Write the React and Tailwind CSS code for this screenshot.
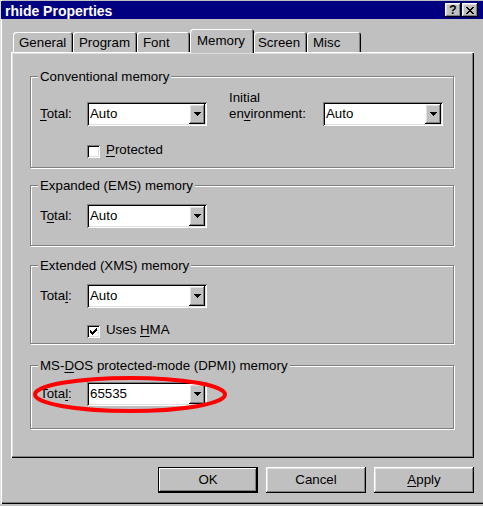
import React from "react";

// win95 bevels
const raised =
  "shadow-[inset_-1px_-1px_0_#000,inset_1px_1px_0_#fff,inset_-2px_-2px_0_#808080,inset_2px_2px_0_#dfdfdf]";
const sunken =
  "shadow-[inset_1px_1px_0_#808080,inset_-1px_-1px_0_#fff,inset_2px_2px_0_#000,inset_-2px_-2px_0_#dfdfdf]";

function Arrow() {
  return (
    <svg width="7" height="4" viewBox="0 0 7 4" shapeRendering="crispEdges">
      <path d="M0 0h7v1h-7z M1 1h5v1h-5z M2 2h3v1h-3z M3 3h1v1h-1z" fill="#000" />
    </svg>
  );
}

function Combo({ value }) {
  return (
    <div className={"w-[120px] h-[24px] bg-white flex p-[2px] " + sunken}>
      <div className="flex-1 leading-[20px] pl-[1px]">{value}</div>
      <div className={"w-[16px] bg-[#c0c0c0] flex items-center justify-center " + raised}>
        <Arrow />
      </div>
    </div>
  );
}

function Checkbox({ checked, children }) {
  return (
    <div className="flex items-center pl-[56px]">
      <div className={"w-[13px] h-[13px] bg-white flex items-center justify-center " + sunken}>
        {checked && (
          <svg width="7" height="7" viewBox="0 0 7 7" shapeRendering="crispEdges">
            <path
              d="M6 0h1v1h-1z M5 1h2v1h-2z M0 2h1v1h-1z M4 2h3v1h-3z M0 3h2v1h-2z M3 3h3v1h-3z M0 4h5v1h-5z M1 5h3v1h-3z M2 6h1v1h-1z"
              fill="#000"
            />
          </svg>
        )}
      </div>
      <span className="ml-[6px] leading-[16px] pb-[3px]">{children}</span>
    </div>
  );
}

function Group({ label, h, mt, children }) {
  return (
    <div
      className={
        "w-[424px] border border-[#808080] shadow-[1px_1px_0_#fff,inset_1px_1px_0_#fff] " + h + " " + mt
      }
    >
      <div className="-mt-[8px] ml-[7px] w-fit px-[2px] bg-[#c0c0c0] leading-[16px]">{label}</div>
      {children}
    </div>
  );
}

function TotalRow({ children, mt }) {
  return (
    <div className={"flex items-center pl-[9px] " + mt}>
      <span className="w-[47px] leading-[16px]">{children}</span>
      <Combo value="Auto" />
    </div>
  );
}

const u = (c) => <span className="underline underline-offset-[2px]">{c}</span>;

const tabs = [
  { name: "General", w: "w-[60px]", pl: "pl-[6px]" },
  { name: "Program", w: "w-[64px]", pl: "pl-[6px]" },
  { name: "Font", w: "w-[53px]", pl: "pl-[6px]" },
  { name: "Memory", w: "w-[64px]", pl: "pl-[7px]", active: true },
  { name: "Screen", w: "w-[53px]", pl: "pl-[4px]" },
  { name: "Misc", w: "w-[54px]", pl: "pl-[6px]" },
];

export default function App() {
  return (
    <div className="relative w-[483px] h-[506px] overflow-hidden bg-[#c0c0c0] text-black text-[13.3px] font-['Liberation_Sans',Arial,sans-serif]">
      <div className="h-[504px] flex flex-col shadow-[inset_1px_0_0_#dfdfdf,inset_2px_0_0_#fff,inset_0_-1px_0_#000,inset_0_-2px_0_#808080]">
        {/* title bar */}
        <div className="mt-[1px] ml-[1px] h-[18px] bg-[#000080] flex items-center justify-between pl-[4px] pr-[5px]">
          <span className="text-white font-bold text-[14px] leading-[18px] pt-[1px]">rhide Properties</span>
          <div className="flex gap-[1px]">
            <div
              className={
                "w-[16px] h-[14px] bg-[#c0c0c0] text-black flex items-center justify-center font-bold text-[12px] leading-[12px] " +
                raised
              }
            >
              ?
            </div>
            <div className={"w-[16px] h-[14px] bg-[#c0c0c0] flex items-center justify-center " + raised}>
              <svg width="8" height="7" viewBox="0 0 8 7" shapeRendering="crispEdges">
                <path
                  d="M0 0h2v1h-2z M6 0h2v1h-2z M1 1h2v1h-2z M5 1h2v1h-2z M2 2h4v1h-4z M3 3h2v1h-2z M2 4h4v1h-4z M1 5h2v1h-2z M5 5h2v1h-2z M0 6h2v1h-2z M6 6h2v1h-2z"
                  fill="#000"
                />
              </svg>
            </div>
          </div>
        </div>

        <div className="mt-[10px] pl-[11px] pr-[9px]">
          {/* tabs */}
          <div className="flex items-end pl-[2px]">
            {tabs.map((t) =>
              t.active ? (
                <div
                  key={t.name}
                  className={
                    "relative z-10 -mb-[1px] h-[24px] pt-[4px] bg-[#c0c0c0] rounded-t-[3px] leading-[16px] shadow-[inset_1px_1px_0_#fff,inset_-1px_0_0_#000,inset_-2px_0_0_#808080] " +
                    t.w +
                    " " +
                    t.pl
                  }
                >
                  {t.name}
                </div>
              ) : (
                <div
                  key={t.name}
                  className={
                    "h-[20px] pt-[3px] rounded-t-[3px] leading-[16px] shadow-[inset_1px_1px_0_#fff,inset_-1px_0_0_#000,inset_-2px_0_0_#808080] " +
                    t.w +
                    " " +
                    t.pl
                  }
                >
                  {t.name}
                </div>
              )
            )}
          </div>

          {/* panel */}
          <div className="h-[406px] pl-[19px] pt-[24px] shadow-[inset_1px_1px_0_#fff,inset_-1px_-1px_0_#000,inset_-2px_-2px_0_#808080,inset_2px_2px_0_#dfdfdf]">
            <Group label="Conventional memory" h="h-[92px]" mt="mt-0">
              <div className="mt-[5px] flex items-start pl-[9px]">
                <span className="w-[47px] mt-[16px] leading-[16px]">{u("T")}otal:</span>
                <div className="mt-[12px]">
                  <Combo value="Auto" />
                </div>
                <span className="ml-[22px] w-[94px] leading-[16px]">
                  Initial
                  <br />
                  en{u("v")}ironment:
                </span>
                <div className="mt-[12px]">
                  <Combo value="Auto" />
                </div>
              </div>
              <div className="mt-[16px]">
                <Checkbox>{u("P")}rotected</Checkbox>
              </div>
            </Group>

            <Group label="Expanded (EMS) memory" h="h-[61px]" mt="mt-[17px]">
              <TotalRow mt="mt-[10px]">
                T{u("o")}tal:
              </TotalRow>
            </Group>

            <Group label="Extended (XMS) memory" h="h-[79px]" mt="mt-[19px]">
              <TotalRow mt="mt-[10px]">
                Tota{u("l")}:
              </TotalRow>
              <div className="mt-[14px]">
                <Checkbox checked>Uses {u("H")}MA</Checkbox>
              </div>
            </Group>

            <Group
              label={
                <>
                  MS-{u("D")}OS protected-mode (DPMI) memory
                </>
              }
              h="h-[64px]"
              mt="mt-[21px]"
            >
              <div className="mt-[8px] flex items-center pl-[9px]">
                <span className="w-[47px] leading-[16px]">Tota{u("l")}:</span>
                <Combo value="65535" />
              </div>
            </Group>
          </div>

          {/* buttons */}
          <div className="mt-[9px] flex justify-end gap-[8px]">
            <button className="w-[100px] h-[26px] border border-black shadow-[inset_-1px_-1px_0_#000,inset_1px_1px_0_#fff,inset_-2px_-2px_0_#808080] leading-[16px]">
              OK
            </button>
            <button className={"w-[100px] h-[26px] leading-[16px] " + raised}>Cancel</button>
            <button className={"w-[100px] h-[26px] leading-[16px] " + raised}>{u("A")}pply</button>
          </div>
        </div>
      </div>

      {/* red annotation ellipse */}
      <svg className="absolute left-[30px] top-[372px]" width="200" height="45" viewBox="0 0 200 45">
        <ellipse cx="100" cy="22.5" rx="95" ry="16.5" fill="none" stroke="#ff0000" strokeWidth="4" />
      </svg>
    </div>
  );
}
